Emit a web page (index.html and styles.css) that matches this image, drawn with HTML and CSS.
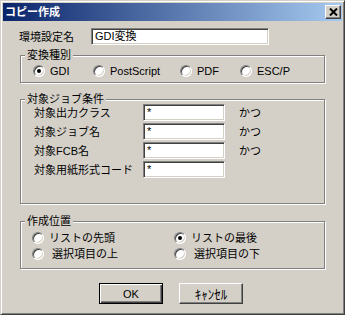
FILE: index.html
```html
<!DOCTYPE html>
<html lang="ja">
<head>
    <meta charset="UTF-8">
    <title>コピー作成</title>
    <link rel="stylesheet" href="styles.css">
</head>
<body>
<div class="window">
    <div class="titlebar">
        <span class="title">コピー作成</span>
        <span class="closebtn">
            <svg width="9" height="8" viewBox="0 0 9 8">
                <path d="M1 0.5 L8 7.5 M8 0.5 L1 7.5" stroke="#000" stroke-width="2" fill="none"/>
            </svg>
        </span>
    </div>
    <div class="content">
        <div class="row1">
            <span class="lbl1">環境設定名</span>
            <span class="edit wide">GDI変換</span>
        </div>

        <div class="group g1">
            <span class="legend">変換種別</span>
            <div class="kinds">
                <span class="opt"><i class="radio on"></i>GDI</span>
                <span class="opt"><i class="radio"></i>PostScript</span>
                <span class="opt"><i class="radio"></i>PDF</span>
                <span class="opt"><i class="radio"></i>ESC/P</span>
            </div>
        </div>

        <div class="group g2">
            <span class="legend">対象ジョブ条件</span>
            <div class="conds">
                <div class="cond"><span class="clbl">対象出力クラス</span><span class="edit">*</span><span class="and">かつ</span></div>
                <div class="cond"><span class="clbl">対象ジョブ名</span><span class="edit">*</span><span class="and">かつ</span></div>
                <div class="cond"><span class="clbl">対象FCB名</span><span class="edit">*</span><span class="and">かつ</span></div>
                <div class="cond"><span class="clbl">対象用紙形式コード</span><span class="edit">*</span></div>
            </div>
        </div>

        <div class="group g3">
            <span class="legend">作成位置</span>
            <div class="places">
                <span class="opt"><i class="radio"></i>リストの先頭</span>
                <span class="opt"><i class="radio on"></i>リストの最後</span>
                <span class="opt"><i class="radio"></i>&nbsp;選択項目の上</span>
                <span class="opt"><i class="radio"></i>&nbsp;選択項目の下</span>
            </div>
        </div>

        <div class="buttons">
            <span class="btn default">OK</span>
            <span class="btn cancel">ｷｬﾝｾﾙ</span>
        </div>
    </div>
</div>
</body>
</html>
```

FILE: styles.css
```css
body{
    margin: 0;
    font-family: "Liberation Sans", "Noto Sans CJK JP", sans-serif;
    font-size: 11px;
    color: #000;
}
.window{
    width: 345px;
    height: 315px;
    box-sizing: border-box;
    background-color: #d4d0c8;
    border: 1px solid;
    border-color: #d4d0c8 #404040 #404040 #d4d0c8;
    box-shadow: inset 1px 1px 0 #fff, inset -1px -1px 0 #808080;
    padding: 2px;
    display: flex;
    flex-direction: column;
}
.titlebar{
    height: 18px;
    background: linear-gradient(to right, #0a246a, #a6caf0);
    display: flex;
    align-items: center;
    justify-content: space-between;
    padding: 0 1px 0 2px;
}
.title{
    color: white;
    font-weight: bold;
    line-height: 12px;
}
.closebtn{
    width: 16px;
    height: 14px;
    box-sizing: border-box;
    background-color: #d4d0c8;
    border: 1px solid;
    border-color: #fff #404040 #404040 #fff;
    box-shadow: inset -1px -1px 0 #808080;
    display: flex;
    align-items: center;
    justify-content: center;
}
.content{
    padding-left: 16px;
    display: flex;
    flex-direction: column;
}
.row1{
    margin-top: 7px;
    display: flex;
    align-items: center;
}
.lbl1{
    width: 72px;
    line-height: 12px;
}
.edit{
    height: 17px;
    width: 82px;
    box-sizing: border-box;
    background-color: #fff;
    border: 1px solid;
    border-color: #808080 #fff #fff #808080;
    box-shadow: inset 1px 1px 0 #404040, inset -1px -1px 0 #d4d0c8;
    padding: 0 3px;
    line-height: 15px;
}
.edit.wide{
    width: 178px;
}
.group{
    margin-left: 1px;
    width: 305px;
    box-sizing: border-box;
    border: 1px solid #808080;
    box-shadow: inset 1px 1px 0 #fff, 1px 1px 0 #fff;
    display: flex;
    flex-direction: column;
}
.legend{
    align-self: flex-start;
    margin: -7px 0 0 4px;
    padding: 0 2px;
    line-height: 12px;
    background-color: #d4d0c8;
}
.g1{
    margin-top: 10px;
    height: 28px;
}
.g2{
    margin-top: 16px;
    height: 105px;
}
.g3{
    margin-top: 17px;
    height: 48px;
}
.opt{
    display: flex;
    align-items: center;
    height: 14px;
    line-height: 12px;
}
.radio{
    width: 12px;
    height: 12px;
    box-sizing: border-box;
    border-radius: 50%;
    background-color: #fff;
    border: 1px solid;
    border-color: #808080 #fff #fff #808080;
    box-shadow: inset 1px 1px 0 #404040, inset -1px -1px 0 #d4d0c8;
    margin-right: 5px;
    display: flex;
    align-items: center;
    justify-content: center;
}
.radio.on::after{
    content: "";
    width: 4px;
    height: 4px;
    border-radius: 50%;
    background-color: #000;
}
.kinds{
    margin-top: 3px;
    padding-left: 12px;
    display: grid;
    grid-template-columns: 60px 87px 60px auto;
}
.conds{
    margin-top: -1px;
    padding-left: 13px;
    display: flex;
    flex-direction: column;
    gap: 2px;
}
.cond{
    display: flex;
    align-items: center;
}
.clbl{
    width: 109px;
    line-height: 12px;
}
.and{
    margin-left: 14px;
    line-height: 12px;
}
.places{
    margin-top: 4px;
    padding-left: 11px;
    display: grid;
    grid-template-columns: 142px auto;
    row-gap: 2px;
}
.buttons{
    margin-top: 14px;
    padding-left: 80px;
    display: flex;
    gap: 16px;
}
.btn{
    width: 64px;
    height: 21px;
    box-sizing: border-box;
    border: 1px solid;
    border-color: #fff #404040 #404040 #fff;
    box-shadow: inset -1px -1px 0 #808080;
    display: flex;
    align-items: center;
    justify-content: center;
}
.btn.cancel{
    font-size: 13px;
}
.btn.default{
    border-color: #000;
    box-shadow: inset 1px 1px 0 #fff, inset -1px -1px 0 #404040, inset -2px -2px 0 #808080;
}
```
